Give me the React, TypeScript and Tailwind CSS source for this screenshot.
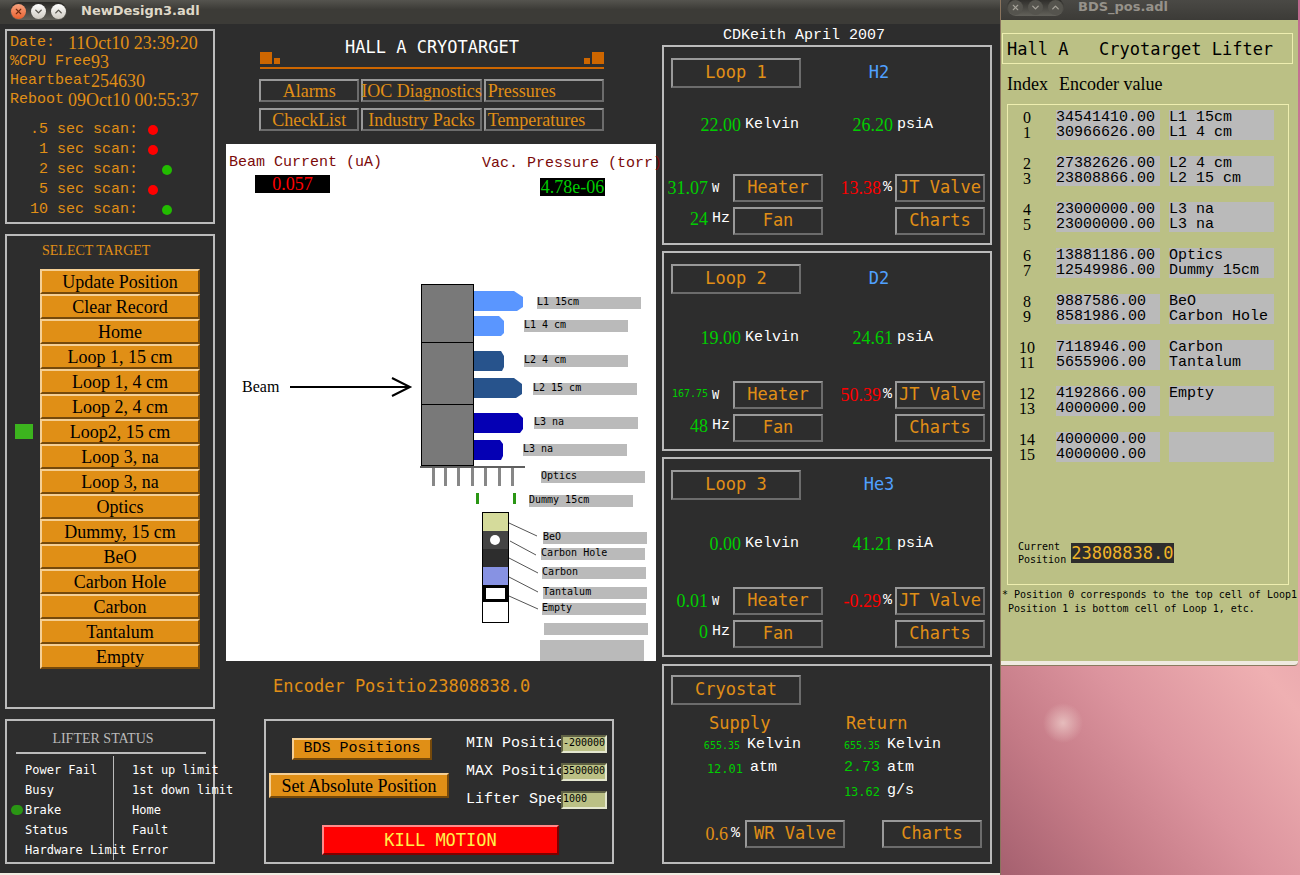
import type { ReactNode } from "react";
import { ChevronDown, ChevronUp, X } from "lucide-react";
import clsx from "clsx";

const serif = "font-['Liberation_Serif',serif] text-[18px]";
const mono = "font-['Liberation_Mono',monospace] text-[15px]";
const bigMono = "font-['DejaVu_Sans_Mono',monospace] text-[17px]";
const midMono = "font-['DejaVu_Sans_Mono',monospace] text-[12px]";
const tinyMono = "font-['DejaVu_Sans_Mono',monospace] text-[10px]";

const panel = "border-2 border-[#bbbbbb]";
const orangeBevel =
  "border-2 border-t-[#f5cf94] border-l-[#f5cf94] border-b-[#75490b] border-r-[#75490b] bg-[#e08f16] text-black";
const greyBevel =
  "border-2 border-t-[#999999] border-l-[#999999] border-b-[#6c6c6c] border-r-[#6c6c6c] text-[#e08f16]";
const inputBevel =
  "border-2 border-t-[#5f6144] border-l-[#5f6144] border-b-[#e4e6cf] border-r-[#e4e6cf]";

const clock = [
  { label: "Date:", value: "11Oct10 23:39:20" },
  { label: "%CPU Free", value: "93" },
  { label: "Heartbeat", value: "254630" },
  { label: "Reboot", value: "09Oct10 00:55:37" },
];

const scans = [
  { label: ".5 sec scan:", on: false },
  { label: "1 sec scan:", on: false },
  { label: "2 sec scan:", on: true },
  { label: "5 sec scan:", on: false },
  { label: "10 sec scan:", on: true },
];

const targets = [
  "Update Position",
  "Clear Record",
  "Home",
  "Loop 1, 15 cm",
  "Loop 1, 4 cm",
  "Loop 2, 4 cm",
  "Loop2, 15 cm",
  "Loop 3, na",
  "Loop 3, na",
  "Optics",
  "Dummy, 15 cm",
  "BeO",
  "Carbon Hole",
  "Carbon",
  "Tantalum",
  "Empty",
];
const activeTarget = 6;

const statusLeft = ["Power Fail", "Busy", "Brake", "Status", "Hardware Limit"];
const statusRight = ["1st up limit", "1st down limit", "Home", "Fault", "Error"];

const loops = [
  { name: "Loop 1", gas: "H2", kelvin: "22.00", psi: "26.20", watts: "31.07", hz: "24", valve: "13.38", raised: true },
  { name: "Loop 2", gas: "D2", kelvin: "19.00", psi: "24.61", watts: "167.75", hz: "48", valve: "50.39", small: true },
  { name: "Loop 3", gas: "He3", kelvin: "0.00", psi: "41.21", watts: "0.01", hz: "0", valve: "-0.29" },
];

const positions = [
  [["34541410.00", "L1 15cm"], ["30966626.00", "L1 4 cm"]],
  [["27382626.00", "L2 4 cm"], ["23808866.00", "L2 15 cm"]],
  [["23000000.00", "L3 na"], ["23000000.00", "L3 na"]],
  [["13881186.00", "Optics"], ["12549986.00", "Dummy 15cm"]],
  [["9887586.00", "BeO"], ["8581986.00", "Carbon Hole"]],
  [["7118946.00", "Carbon"], ["5655906.00", "Tantalum"]],
  [["4192866.00", "Empty"], ["4000000.00", ""]],
  [["4000000.00", ""], ["4000000.00", ""]],
];

const diagramLabels = [
  { x: 311, y: 101, text: "L1 15cm" },
  { x: 298, y: 124, text: "L1 4 cm" },
  { x: 298, y: 159, text: "L2 4 cm" },
  { x: 307, y: 187, text: "L2 15 cm" },
  { x: 308, y: 221, text: "L3 na" },
  { x: 297, y: 248, text: "L3 na" },
  { x: 315, y: 275, text: "Optics" },
  { x: 303, y: 299, text: "Dummy 15cm" },
  { x: 317, y: 336, text: "BeO" },
  { x: 315, y: 352, text: "Carbon Hole" },
  { x: 316, y: 371, text: "Carbon" },
  { x: 317, y: 391, text: "Tantalum" },
  { x: 316, y: 407, text: "Empty" },
  { x: 318, y: 427, text: "" },
];

function GreyButton({ children, className }: { children: ReactNode; className?: string }) {
  return (
    <button type="button" className={clsx(greyBevel, "flex items-center justify-center whitespace-nowrap", className)}>
      {children}
    </button>
  );
}

function WindowButtons({ active }: { active?: boolean }) {
  const plain = active
    ? "bg-gradient-to-b from-white to-[#cfcbc2] text-[#55534c]"
    : "bg-[#55544e] text-[#a5a299]";
  return (
    <div className="flex h-[18px] items-center gap-[5px] rounded-full bg-gradient-to-b from-[#2a2926] to-[#63625b] px-px">
      <button
        type="button"
        aria-label="Close"
        className={clsx(
          "flex size-[15px] items-center justify-center rounded-full",
          active ? "bg-gradient-to-b from-[#f7a37f] to-[#e8602c] text-[#6b2a10]" : plain
        )}
      >
        <X size={9} strokeWidth={3} />
      </button>
      <button type="button" aria-label="Minimize" className={clsx("flex size-[15px] items-center justify-center rounded-full", plain)}>
        <ChevronDown size={11} strokeWidth={3} />
      </button>
      <button type="button" aria-label="Maximize" className={clsx("flex size-[15px] items-center justify-center rounded-full", plain)}>
        <ChevronUp size={11} strokeWidth={3} />
      </button>
    </div>
  );
}

function ClockPanel() {
  return (
    <section className={clsx(panel, "min-h-[195px] pt-[3px] pl-[3px] text-[#e08f16]")}>
      {clock.map((row) => (
        <div key={row.label} className="flex h-[19px] items-center whitespace-nowrap">
          <span className={clsx(mono, "min-w-[58px]")}>{row.label}</span>
          <span className={serif}>{row.value}</span>
        </div>
      ))}
      <div className="mt-[10px]">
        {scans.map((scan) => (
          <div key={scan.label} className="flex h-5 items-center">
            <span className={clsx(mono, "w-[128px] text-right whitespace-nowrap")}>{scan.label}</span>
            <span className={clsx("size-[10px] rounded-full", scan.on ? "ml-6 bg-[#22bb00]" : "ml-[10px] bg-[#ff0000]")} />
          </div>
        ))}
      </div>
    </section>
  );
}

function TargetPanel() {
  return (
    <section className={clsx(panel, "min-h-[475px] pr-[13px]")}>
      <h2 className="flex h-[33px] items-center pb-[4px] pl-[35px] font-['Liberation_Serif',serif] text-[14px] whitespace-nowrap text-[#e08f16]">
        SELECT TARGET
      </h2>
      {targets.map((target, i) => (
        <div key={i} className="flex h-[25px] items-center">
          <div className="w-[33px] shrink-0 pl-2">
            {i === activeTarget && <div className="h-[15px] w-[18px] bg-[#3cb41e]" />}
          </div>
          <button type="button" className={clsx(orangeBevel, serif, "h-full flex-1 leading-5 whitespace-nowrap")}>
            {target}
          </button>
        </div>
      ))}
    </section>
  );
}

function StatusPanel() {
  return (
    <section className={clsx(panel, "min-h-[145px] text-white")}>
      <h2 className="mr-[7px] ml-[9px] flex h-[33px] items-center justify-center border-b-2 border-[#bbbbbb] pt-[3px] pr-[16px] font-['Liberation_Serif',serif] text-[14px] text-[#bbbbbb]">
        LIFTER STATUS
      </h2>
      <div className={clsx(midMono, "mt-[2px] flex whitespace-nowrap")}>
        <ul className="w-[107px] shrink-0 border-r border-[#bbbbbb] pt-[4px]">
          {statusLeft.map((name) => (
            <li key={name} className="flex h-5 items-center">
              <span className="w-[18px] shrink-0 pl-[4px]">
                {name === "Brake" && <span className="block h-[10px] w-[12px] rounded-full bg-[#2a9614]" />}
              </span>
              {name}
            </li>
          ))}
        </ul>
        <ul className="min-w-0 pt-[4px] pl-[18px]">
          {statusRight.map((name) => (
            <li key={name} className="flex h-5 items-center">
              {name}
            </li>
          ))}
        </ul>
      </div>
    </section>
  );
}

function TargetDiagram() {
  return (
    <svg viewBox="0 0 430 465" className="block w-full" role="img" aria-label="Target ladder">
      <text x="16" y="196" className="font-['Liberation_Serif',serif] text-[16px]">
        Beam
      </text>
      <path d="M64 191H183M166 182L184 191L166 200" fill="none" stroke="#000" strokeWidth="2" />

      {/* lifter body */}
      <g fill="#797979" stroke="#000" shapeRendering="crispEdges">
        <rect x="195.5" y="88.5" width="52" height="58" />
        <rect x="195.5" y="146.5" width="52" height="62" />
        <rect x="195.5" y="208.5" width="52" height="61" />
      </g>

      {/* cells */}
      <g fill="#5a96ff">
        <path d="M248 95H288L297 101V111L291 115H248Z" />
        <path d="M248 120H273L278 125V137L275 140H248Z" />
      </g>
      <g fill="#27538c">
        <path d="M248 155H275L278 160V171L276 175H248Z" />
        <path d="M248 182H288L296 188V198L290 202H248Z" />
      </g>
      <g fill="#0500b4">
        <path d="M248 217H292L297 222V233L294 237H248Z" />
        <path d="M248 244H274L277 248V260L275 264H248Z" />
      </g>

      {/* optics rack */}
      <rect x="194" y="270" width="105" height="2" fill="#5f5f5f" />
      {[206, 218, 231, 245, 258, 272, 285].map((x) => (
        <rect key={x} x={x} y="272" width="3" height="18" fill="#878787" />
      ))}
      <rect x="250" y="297" width="3" height="11" fill="#2a9614" />
      <rect x="287" y="297" width="3" height="11" fill="#2a9614" />

      {/* solid targets */}
      <rect x="256" y="316" width="27" height="111" fill="#000" />
      <rect x="257" y="317" width="25" height="18" fill="#d5db9b" />
      <rect x="257" y="335" width="25" height="18" fill="#444444" />
      <rect x="257" y="353" width="25" height="18" fill="#2d2d2d" />
      <rect x="257" y="371" width="25" height="18" fill="#8792e3" />
      <rect x="260" y="392" width="19" height="11" fill="#fff" />
      <rect x="257" y="406" width="25" height="20" fill="#fff" />
      <circle cx="269" cy="344" r="5" fill="#fff" />
      <path
        d="M283 327L311 340M284 345L310 359M283 362L312 377M283 381L312 396M283 400L312 413"
        stroke="#555"
        fill="none"
      />

      {diagramLabels.map((label) => (
        <g key={label.y}>
          <rect x={label.x} y={label.y} width="104" height="12" fill="#bababa" />
          <text x={label.x} y={label.y + 8} className="font-['DejaVu_Sans_Mono',monospace] text-[10px]">
            {label.text}
          </text>
        </g>
      ))}
      <rect x="314" y="444" width="104" height="21" fill="#bababa" />
    </svg>
  );
}

function MotionField({ id, label, value }: { id: string; label: string; value: string }) {
  return (
    <div className="flex h-[18px] items-center">
      <label htmlFor={id} className={clsx(mono, "w-[95px] shrink-0 overflow-hidden whitespace-nowrap text-white")}>
        {label}
      </label>
      <input
        id={id}
        defaultValue={value}
        className={clsx(inputBevel, tinyMono, "h-[18px] w-[46px] rounded-none bg-[#bbc085] pb-[3px] text-black outline-none")}
      />
    </div>
  );
}

function CentreColumn() {
  return (
    <main className="mr-[6px] ml-[11px] min-w-0 flex-1">
      <div className="mr-[52px] ml-[33px]">
        <header className="ml-px flex items-end justify-between border-b-2 border-[#cd6600] pt-[11px] pb-[3px]">
          <div className="flex items-end gap-[2px]">
            <div className="size-3 bg-[#cd6600]" />
            <div className="size-[6px] bg-[#cd6600]" />
          </div>
          <h1 className={clsx(bigMono, "mb-[5px] leading-6 whitespace-nowrap text-white")}>HALL A CRYOTARGET</h1>
          <div className="flex items-end gap-[2px]">
            <div className="size-[6px] bg-[#cd6600]" />
            <div className="size-3 bg-[#cd6600]" />
          </div>
        </header>
        <nav
          className={clsx(
            serif,
            "mt-[10px] grid auto-rows-[23px] grid-cols-[minmax(0,10fr)_minmax(0,12fr)_minmax(0,12fr)] gap-x-[2px] gap-y-[6px] leading-5"
          )}
        >
          <GreyButton>Alarms</GreyButton>
          <GreyButton>IOC Diagnostics</GreyButton>
          <GreyButton className="justify-start pl-[2px]">Pressures</GreyButton>
          <GreyButton>CheckList</GreyButton>
          <GreyButton>Industry Packs</GreyButton>
          <GreyButton className="justify-start pl-[2px]">Temperatures</GreyButton>
        </nav>
      </div>

      <section className="mt-[13px] bg-white">
        <div className="flex h-[52px] justify-between pl-[3px] whitespace-nowrap">
          <div className="pt-[9px]">
            <p className={clsx(mono, "leading-5 text-[#7b0a0a]")}>Beam Current (uA)</p>
            <p className={clsx(serif, "mt-[2px] ml-[26px] w-[75px] bg-black text-center leading-[18px] text-[#ff0000]")}>0.057</p>
          </div>
          <div className="w-[174px] pt-[10px]">
            <p className={clsx(mono, "leading-5 text-[#7b0a0a]")}>Vac. Pressure (torr)</p>
            <p className={clsx(serif, "mt-[4px] ml-[58px] w-[65px] bg-black text-center leading-[18px] text-[#00cd00]")}>
              4.78e-06
            </p>
          </div>
        </div>
        <TargetDiagram />
      </section>

      <div className={clsx(bigMono, "flex pt-[13px] pb-[21px] pl-[47px] leading-6 whitespace-nowrap text-[#e08f16]")}>
        <span className="w-[155px] overflow-hidden">Encoder Position</span>
        <span>23808838.0</span>
      </div>

      <section className={clsx(panel, "mr-[42px] ml-[38px] min-h-[145px]")}>
        <div className="flex justify-between pr-[5px] pl-[3px]">
          <div className="flex w-[180px] flex-col pt-[17px]">
            <button type="button" className={clsx(orangeBevel, mono, "ml-[23px] h-[22px] w-[140px] leading-4 whitespace-nowrap")}>
              BDS Positions
            </button>
            <button type="button" className={clsx(orangeBevel, serif, "mt-[13px] h-[25px] w-full leading-5 whitespace-nowrap")}>
              Set Absolute Position
            </button>
          </div>
          <div className="flex flex-col gap-[10px] pt-[14px]">
            <MotionField id="min" label="MIN Position" value="-200000" />
            <MotionField id="max" label="MAX Position" value="3500000" />
            <MotionField id="speed" label="Lifter Speed" value="1000" />
          </div>
        </div>
        <button
          type="button"
          className={clsx(
            bigMono,
            "mt-4 ml-[56px] h-[30px] w-[237px] border-2 border-t-[#ff8a8a] border-r-[#7f0000] border-b-[#7f0000] border-l-[#ff8a8a] bg-[#ff0000] leading-6 text-[#fff04a]"
          )}
        >
          KILL MOTION
        </button>
      </section>
    </main>
  );
}

function Reading({ value, unit, className }: { value: string; unit: string; className?: string }) {
  return (
    <div className="flex items-center justify-end gap-[4px] whitespace-nowrap">
      <span className={clsx("leading-5", className)}>{value}</span>
      <span className={clsx(mono, "text-white")}>{unit}</span>
    </div>
  );
}

function LoopPanel({ loop }: { loop: (typeof loops)[number] }) {
  return (
    <section className={clsx(panel, bigMono, "min-h-[200px]")}>
      <div className="flex items-center pt-[11px] pl-[7px]">
        <GreyButton className="h-[30px] w-[130px]">{loop.name}</GreyButton>
        <span className="w-[156px] text-center text-[#50a0ff]">{loop.gas}</span>
      </div>
      <div className={clsx("flex h-5", loop.raised ? "mt-[26px] mb-[40px]" : "mt-[33px] mb-[34px]")}>
        <div className="w-[135px]">
          <Reading value={loop.kelvin} unit="Kelvin" className={clsx(serif, "text-[#00cd00]")} />
        </div>
        <div className="w-[134px]">
          <Reading value={loop.psi} unit="psiA" className={clsx(serif, "text-[#00cd00]")} />
        </div>
      </div>
      <div className="grid auto-rows-[28px] grid-cols-[66px_90px_1fr_90px] gap-y-[5px] pr-[5px]">
        <div className="flex items-center">
          <span className={clsx(loop.small ? tinyMono : serif, "w-[44px] shrink-0 text-right text-[#00cd00]", loop.small && "pb-1")}>
            {loop.watts}
          </span>
          <span className={clsx(midMono, "ml-1 text-white")}>W</span>
        </div>
        <GreyButton className="ml-[3px] w-[90px]">Heater</GreyButton>
        <div className="flex items-center justify-end gap-[2px] pr-[3px]">
          <span className={clsx(serif, "text-[#ff0000]")}>{loop.valve}</span>
          <span className={clsx(mono, "text-white")}>%</span>
        </div>
        <GreyButton>JT Valve</GreyButton>
        <div className="flex items-center pb-1">
          <span className={clsx(serif, "w-[44px] shrink-0 text-right text-[#00cd00]")}>{loop.hz}</span>
          <span className={clsx(mono, "ml-1 text-white")}>Hz</span>
        </div>
        <GreyButton className="ml-[3px] w-[90px]">Fan</GreyButton>
        <div />
        <GreyButton>Charts</GreyButton>
      </div>
    </section>
  );
}

function GasReading({ value, unit, size }: { value: string; unit: string; size: string }) {
  return (
    <div className="flex items-center">
      <span className={clsx(size, "w-[79px] text-right text-[#00cd00]")}>{value}</span>
      <span className={clsx(mono, "ml-[7px] text-white")}>{unit}</span>
    </div>
  );
}

function CryostatPanel() {
  return (
    <section className={clsx(panel, "mt-px min-h-[200px]")}>
      <div className="pt-[9px] pl-[7px]">
        <GreyButton className={clsx(bigMono, "h-[30px] w-[130px]")}>Cryostat</GreyButton>
      </div>
      <div className="mt-[6px] grid auto-rows-[23px] grid-cols-[137px_1fr]">
        <h3 className={clsx(bigMono, "pl-[45px] text-[#e08f16]")}>Supply</h3>
        <h3 className={clsx(bigMono, "pl-[45px] text-[#e08f16]")}>Return</h3>
        <GasReading value="655.35" unit="Kelvin" size={tinyMono} />
        <GasReading value="655.35" unit="Kelvin" size={tinyMono} />
        <GasReading value="12.01" unit="atm" size={midMono} />
        <GasReading value="2.73" unit="atm" size={mono} />
        <div />
        <GasReading value="13.62" unit="g/s" size={midMono} />
      </div>
      <div className="mt-[17px] flex items-center pr-[8px]">
        <div className="flex w-[81px] items-center justify-end gap-[3px] pr-[5px]">
          <span className={clsx(serif, "text-[#e08f16]")}>0.6</span>
          <span className={clsx(mono, "text-white")}>%</span>
        </div>
        <GreyButton className={clsx(bigMono, "h-[28px] w-[100px]")}>WR Valve</GreyButton>
        <GreyButton className={clsx(bigMono, "ml-auto h-[28px] w-[100px]")}>Charts</GreyButton>
      </div>
    </section>
  );
}

function LifterWindow() {
  return (
    <aside className="w-[300px] shrink-0 border-l border-[#8a745e] bg-[radial-gradient(circle_at_62px_723px,#e6bcbc_0,#e6bcbc00_20px),linear-gradient(50deg,#a5606f_0%,#c47a86_13%,#dc949e_26%,#efb0b2_42%,#c0688f_100%)] pr-[2px]">
      <header className="flex h-5 items-center gap-[14px] bg-gradient-to-b from-[#4a4945] to-[#3c3b37] pb-[6px] pl-[6px]">
        <WindowButtons />
        <span className="font-['DejaVu_Sans',sans-serif] text-[13px] font-bold text-[#96928a]">BDS_pos.adl</span>
      </header>
      <div className="rounded-br border-b border-[#8a7a5e] bg-[#efeae0] pb-[4px]">
        <div className="bg-[#bbc085] pt-[13px] pb-[45px] text-black">
          <h2 className={clsx(bigMono, "mr-[5px] ml-px h-[31px] border border-[#eeeeb0] pl-1 leading-[30px] whitespace-pre")}>
            {"Hall A   Cryotarget Lifter"}
          </h2>
          <div className={clsx(serif, "flex h-10 items-center pl-[6px]")}>
            <span className="w-[52px]">Index</span>
            <span>Encoder value</span>
          </div>
          <div className="mr-[9px] ml-[6px] border border-[#eeeeb0] pt-[5px] pb-[18px]">
            <table className="w-[266px] border-collapse">
              {positions.map((pair, i) => (
                <tbody key={i}>
                  {i > 0 && (
                    <tr className="h-4">
                      <td colSpan={3} />
                    </tr>
                  )}
                  {pair.map(([encoder, name], j) => (
                    <tr key={j} className="h-[15px]">
                      <td className="w-[38px] p-0 text-center font-['Liberation_Serif',serif] text-[16px] leading-[15px]">
                        {i * 2 + j}
                      </td>
                      <td className={clsx(mono, "w-[115px] p-0 leading-[15px]")}>
                        <div className="ml-[10px] h-[15px] w-[104px] bg-[#bababa]">{encoder}</div>
                      </td>
                      <td className={clsx(mono, "p-0 leading-[15px]")}>
                        <div className="ml-[8px] h-[15px] bg-[#bababa] whitespace-nowrap">{name}</div>
                      </td>
                    </tr>
                  ))}
                </tbody>
              ))}
            </table>
            <div className="mt-[78px] flex items-center gap-[5px] pl-[10px]">
              <span className={clsx(tinyMono, "leading-[13px]")}>
                Current
                <br />
                Position
              </span>
              <span className={clsx(bigMono, "bg-[#2d2d2d] leading-5 text-[#f0b428]")}>23808838.0</span>
            </div>
          </div>
          <p className={clsx(tinyMono, "mt-[3px] pl-px leading-[14px] whitespace-pre")}>
            {"* Position 0 corresponds to the top cell of Loop1\n Position 1 is bottom cell of Loop 1, etc."}
          </p>
        </div>
      </div>
    </aside>
  );
}

export default function App() {
  return (
    <div className="flex min-h-screen overflow-hidden">
      <div className="flex min-w-0 flex-1 flex-col border-b-2 border-[#f2ede2] bg-[#2d2d2d]">
        <header className="flex h-6 items-center gap-[14px] bg-gradient-to-b from-[#55544f] to-[#3c3b37] to-40% pb-[2px] pl-[10px]">
          <WindowButtons active />
          <span className="font-['DejaVu_Sans',sans-serif] text-[13px] font-bold text-[#dfd8c8]">NewDesign3.adl</span>
        </header>
        <div className="flex flex-1 pr-[8px] pb-[9px] pl-[5px]">
          <div className="flex w-[210px] shrink-0 flex-col gap-[10px] pt-[5px]">
            <ClockPanel />
            <TargetPanel />
            <StatusPanel />
          </div>
          <CentreColumn />
          <div className="flex w-[330px] shrink-0 flex-col gap-[6px]">
            <p className={clsx(mono, "-mb-[6px] h-[21px] pl-[61px] leading-6 whitespace-nowrap text-white")}>
              CDKeith April 2007
            </p>
            {loops.map((loop) => (
              <LoopPanel key={loop.name} loop={loop} />
            ))}
            <CryostatPanel />
          </div>
        </div>
      </div>
      <LifterWindow />
    </div>
  );
}
